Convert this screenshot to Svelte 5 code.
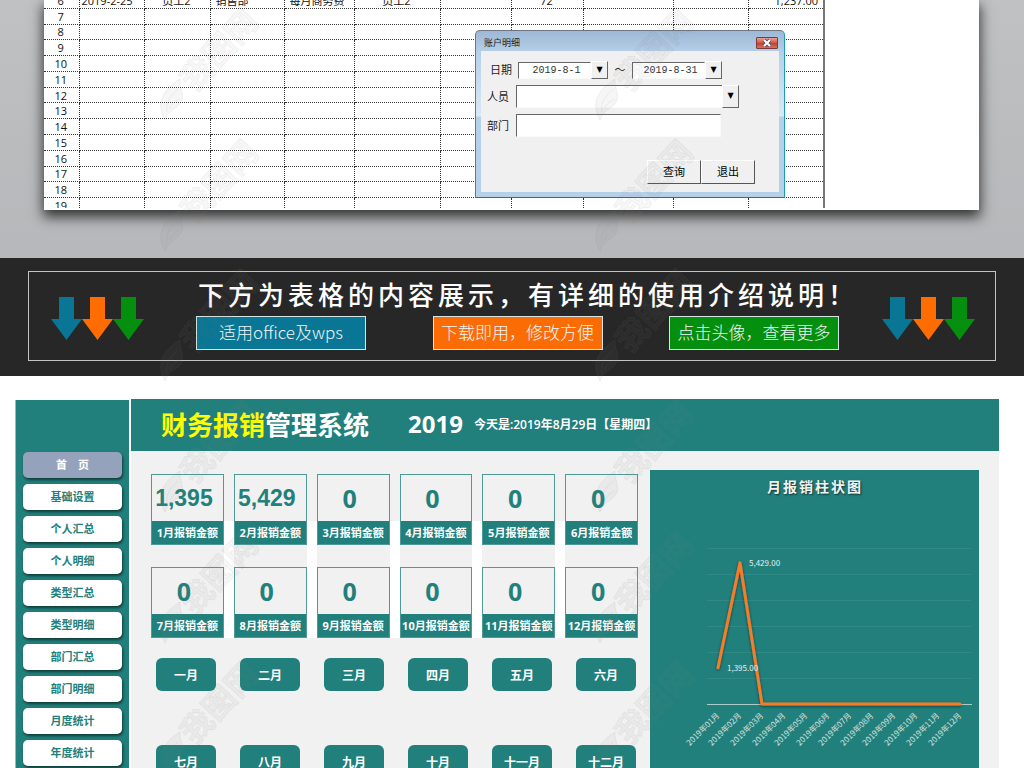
<script>
  const sheetRows = Array.from({ length: 14 }, (_, i) =>
    i === 0
      ? [6, '2019-2-25', '员工2', '销售部', '每月商务费', '员工2', '', '72', '', '', '1,237.00']
      : [i + 6, '', '', '', '', '', '', '', '', '', '']
  );
  const columnWidths = [35, 65, 66, 74, 70, 86, 71, 72, 90, 75, 76];

  const arrows = ['#087694', '#ff6c02', '#04900e'];
  const tags = [
    { text: '适用office及wps', color: '#087694' },
    { text: '下载即用，修改方便', color: '#fb6c05' },
    { text: '点击头像，查看更多', color: '#04900e' }
  ];

  const nav = ['首　页', '基础设置', '个人汇总', '个人明细', '类型汇总', '类型明细', '部门汇总', '部门明细', '月度统计', '年度统计'];
  const totals = ['1,395', '5,429', ...Array(10).fill('0')];
  const months = ['一月', '二月', '三月', '四月', '五月', '六月', '七月', '八月', '九月', '十月', '十一月', '十二月'];

  const values = [1395, 5429, 0, 0, 0, 0, 0, 0, 0, 0, 0, 0];
  const px = (i) => 68 + i * 22;
  const py = (v) => 234 - (v * 26) / 1000;
  const line = values.map((v, i) => `${px(i)},${py(v)}`).join(' ');
  const labels = values.map((_, i) => `2019年${String(i + 1).padStart(2, '0')}月`);

  const marks = [208, 643].flatMap((x) => [67, 198, 328, 459, 590, 720].map((y) => [x, y]));
</script>

<div class="page">
  <section class="stage">
    <div class="sheet">
      <div class="clip">
        <table>
          <colgroup>
            {#each columnWidths as w}<col style="width:{w}px" />{/each}
          </colgroup>
          <tbody>
            {#each sheetRows as row}
              <tr>
                {#each row as cell}<td>{cell}</td>{/each}
              </tr>
            {/each}
          </tbody>
        </table>
      </div>
    </div>

    <form class="dialog" onsubmit={(e) => e.preventDefault()}>
      <div class="titlebar">
        <span>账户明细</span>
        <button type="button" class="close" aria-label="关闭">
          <svg width="10" height="8" viewBox="0 0 10 8"><path d="M2 1l6 6M8 1l-6 6" stroke="#54505c" stroke-width="4" /><path d="M2 1l6 6M8 1l-6 6" stroke="#fff" stroke-width="2" /></svg>
        </button>
      </div>
      <div class="client">
        <div class="row dates">
          <label for="from">日期</label>
          <input id="from" class="date" value="2019-8-1" />
          <button type="button" class="drop" aria-label="选择开始日期">▼</button>
          <span class="tilde">～</span>
          <input class="date" aria-label="结束日期" value="2019-8-31" />
          <button type="button" class="drop" aria-label="选择结束日期">▼</button>
        </div>
        <div class="row">
          <label for="person">人员</label>
          <div class="combo">
            <select id="person"><option></option></select>
            <span class="drop face" aria-hidden="true">▼</span>
          </div>
        </div>
        <div class="row">
          <label for="dept">部门</label>
          <input id="dept" class="wide" />
        </div>
        <div class="actions">
          <button type="submit">查询</button>
          <button type="button">退出</button>
        </div>
      </div>
    </form>
  </section>

  <section class="banner">
    <div class="frame">
      {#snippet arrowSet()}
        <svg class="arrows" width="93" height="43" viewBox="0 0 93 43" aria-hidden="true">
          {#each arrows as c, i}
            <path transform="translate({i * 31})" d="M8 0h15v22h8L15.500 43 0 22h8z" fill={c} />
          {/each}
        </svg>
      {/snippet}
      {@render arrowSet()}
      <div class="pitch">
        <h2>下方为表格的内容展示，有详细的使用介绍说明！</h2>
        <div class="tags">
          {#each tags as tag}<span style="background:{tag.color}">{tag.text}</span>{/each}
        </div>
      </div>
      {@render arrowSet()}
    </div>
  </section>

  <section class="dashboard">
    <nav>
      {#each nav as item, i}
        <button class:active={i === 0}>{item}</button>
      {/each}
    </nav>
    <div class="main">
      <header>
        <h1><em>财务报销</em>管理系统</h1>
        <strong>2019</strong>
        <span>今天是:2019年8月29日【星期四】</span>
      </header>
      <div class="content">
        <div class="left">
          <div class="cards">
            {#each totals as total, i}
              <div class="slot">
                <div class="card">
                  <b class:amount={total !== '0'}>{total}</b>
                  <span>{i + 1}月报销金额</span>
                </div>
              </div>
            {/each}
          </div>
          <div class="months">
            {#each months as m}<button>{m}</button>{/each}
          </div>
        </div>
        <div class="chart">
          <svg viewBox="0 0 329 320" role="img" aria-label="月报销柱状图">
            <defs>
              <filter id="soft" x="-10%" y="-10%" width="120%" height="120%">
                <feDropShadow dx="0" dy="1" stdDeviation="1.500" flood-color="#000" flood-opacity="0.55" />
              </filter>
            </defs>
            <text class="heading" x="165" y="22" text-anchor="middle">月报销柱状图</text>
            {#each [78, 104, 130, 156, 182, 208] as y}
              <path d="M57 {y + 0.5}H321" stroke="#2f8a85" />
            {/each}
            <path d="M57 234.500H322" stroke="#a9cdca" />
            <polyline points={line} fill="none" stroke="#f57d2b" stroke-width="3" stroke-linejoin="round" stroke-linecap="round" filter="url(#soft)" />
            <text x="99" y="96">5,429.00</text>
            <text x="77" y="201">1,395.00</text>
            {#each labels as l, i}
              <text class="axis" text-anchor="end" transform="translate({px(i) + 2} 246) rotate(-45)">{l}</text>
            {/each}
          </svg>
        </div>
      </div>
    </div>
  </section>

  <svg class="marks" aria-hidden="true">
    {#each marks as [x, y]}
      <g transform="translate({x} {y})">
        <path d="M-43 53C-53 35-44 22-28 12-29 20-24 25-26 33-29 42-39 41-43 53zM-41 45C-43 34-36 28-30 22M-38 42C-37 36-32 34-28 32" />
        <text transform="rotate(-47)" x="-28" y="8">我图网</text>
      </g>
    {/each}
  </svg>
</div>

<style>
  :global(body) { background: #fff; }
  .page {
    position: relative;
    display: flex;
    flex-direction: column;
    height: 100vh;
    overflow: hidden;
    font-family: "Open Sans", "Noto Sans CJK SC", sans-serif;
    font-size: 11px;
    --teal: #21807c;
  }
  .page * { box-sizing: border-box; }
  button, input, select { font: inherit; margin: 0; padding: 0; }

  .stage {
    position: relative;
    flex: none;
    padding: 0 45px 48px 44px;
    background: linear-gradient(#c0c1c3, #b9babc 70%, #b7b8bb);
  }
  .sheet {
    background: #fff;
    padding-bottom: 2px;
    box-shadow: 0 6px 12px 1px #333;
  }
  .clip { height: 208px; overflow: hidden; }
  table {
    width: 780px;
    height: 221px;
    margin-top: -7px;
    table-layout: fixed;
    border-collapse: collapse;
    border-right: 2px solid #777;
    color: #111;
  }
  td {
    padding: 1px 1px 0 0;
    text-align: center;
    line-height: 12px;
    white-space: nowrap;
    border-bottom: 1px dotted #333;
    border-right: 1px dotted #333;
  }
  td:nth-child(2) { padding-left: 2px; text-align: left; }
  td:nth-child(4), td:nth-child(5) { padding-left: 5px; text-align: left; }
  td:last-child { padding-right: 5px; text-align: right; border-right: 0; }

  .dialog {
    position: absolute;
    left: 475px;
    top: 30px;
    width: 310px;
    padding: 0 5px 5px;
    border: 1px solid #6c7783;
    border-right-color: #1c9db4;
    border-bottom-color: #127a94;
    border-radius: 5px 5px 0 0;
    background: linear-gradient(#9db8d5, #b7d0ea 22px, #dbe8f5 85px, #b5d0e9 86px);
    font-family: "Noto Sans CJK SC", sans-serif;
    color: #222;
  }
  .titlebar {
    display: flex;
    align-items: center;
    justify-content: space-between;
    height: 20px;
    padding: 3px 1px 0 3px;
    font-size: 9px;
  }
  .close {
    display: grid;
    place-items: center;
    width: 22px;
    height: 12px;
    border: 1px solid #7b3b3b;
    border-radius: 1px;
    background: linear-gradient(#e3a194, #d3533f 50%, #c2402c 51%, #d8715c);
  }
  .client {
    display: flex;
    flex-direction: column;
    gap: 6px;
    padding: 10px 24px 8px 6px;
    background: #f0f0f0;
  }
  .row { display: flex; align-items: center; }
  .row label { width: 29px; line-height: 20px; padding-bottom: 2px; }
  .dates label { width: 31px; padding-left: 3px; line-height: 16px; }
  .row input, .row select {
    border: 1px solid #fafafa;
    border-top: 1px solid #666;
    border-left: 1px solid #666;
    border-radius: 0;
    background: #fff;
    color: #333;
    outline: 0;
  }
  .row .date {
    width: 73px;
    height: 17px;
    font: 10px "Liberation Mono", monospace;
    text-align: center;
    padding-left: 4px;
  }
  .row .wide { width: 205px; height: 23px; }
  .drop {
    display: grid;
    place-items: center;
    width: 17px;
    height: 18px;
    padding-bottom: 2px;
    border: 1px solid #fff;
    border-right: 1px solid #666;
    border-bottom: 1px solid #666;
    background: #f0f0f0;
    color: #000;
    font: 8px "DejaVu Sans", sans-serif;
  }
  .tilde { width: 24px; text-align: center; line-height: 16px; padding-bottom: 2px; }
  .combo { display: grid; grid-template-columns: 206px 17px; }
  .combo select { grid-area: 1 / 1 / 2 / 3; height: 23px; appearance: none; }
  .combo .face { grid-area: 1 / 2; height: 23px; pointer-events: none; }
  .actions { display: flex; justify-content: flex-end; padding-top: 17px; }
  .actions button {
    width: 54px;
    height: 24px;
    padding-bottom: 2px;
    border: 1px solid #fff;
    border-right: 1px solid #555;
    border-bottom: 1px solid #555;
    background: #f0f0f0;
  }

  .banner { flex: none; padding: 13px 28px 15px; background: #272727; }
  .frame {
    display: grid;
    grid-template-columns: auto 1fr auto;
    height: 90px;
    padding: 0 20px 0 22px;
    border: 1px solid #c4c4c4;
  }
  .arrows { margin-top: 25px; }
  .pitch { min-width: 0; padding: 6px 43px 0 52px; }
  h2 {
    margin: 0 0 6px 2px;
    color: #fff;
    font: 500 26px/32px "Noto Sans CJK SC", sans-serif;
    letter-spacing: 4px;
    white-space: nowrap;
  }
  .tags { display: flex; justify-content: space-between; }
  .tags span {
    width: 170px;
    height: 34px;
    border: 1px solid #d5e5e5;
    color: #f1f5f5;
    font: 300 17px/30px "Noto Sans CJK SC", sans-serif;
    text-align: center;
    white-space: nowrap;
  }

  .dashboard {
    flex: 1;
    min-height: 0;
    display: grid;
    grid-template-columns: 114px 1fr;
    gap: 2px;
    padding: 23px 25px 0 15px;
  }
  nav {
    display: flex;
    flex-direction: column;
    gap: 6px;
    margin-top: 1px;
    padding: 52px 7px 0 7px;
    border-left: 1px solid #a5b5b3;
    background: var(--teal);
  }
  nav button {
    flex: none;
    height: 26px;
    padding-bottom: 2px;
    border: 0;
    border-radius: 5px;
    background: #fff;
    color: var(--teal);
    font-weight: 700;
    box-shadow: 1px 2px 3px rgba(0, 0, 0, 0.55);
  }
  nav .active { background: #95a2bb; color: #fff; }
  .main { display: flex; flex-direction: column; min-width: 0; background: #f1f1f1; }
  header {
    display: flex;
    flex: none;
    align-items: center;
    height: 52px;
    padding: 0 0 2px 30px;
    background: var(--teal);
    color: #fff;
    font-weight: 700;
    white-space: nowrap;
  }
  h1 { margin: 0 39px 0 0; font: 700 26px/40px "Noto Sans CJK SC", sans-serif; }
  h1 em { font-style: normal; color: #ff0; }
  header strong { margin-right: 11px; font: 700 24px/40px "Noto Sans", sans-serif; }
  header span { font-size: 12px; font-weight: 600; }
  .content {
    flex: 1;
    min-height: 0;
    display: grid;
    grid-template-columns: 487px 1fr;
    gap: 12px;
    padding: 19px 20px 0;
  }
  .left { padding-top: 4px; }
  .cards {
    display: grid;
    grid-template-columns: repeat(6, 1fr);
    column-gap: 10px;
    background: linear-gradient(transparent 47px, #fff 47px);
  }
  .slot { background: #f1f1f1; }
  .slot:nth-child(-n + 6) { padding-bottom: 22px; }
  .card {
    display: flex;
    flex-direction: column;
    border: 1px solid #4f9a96;
    color: var(--teal);
    text-align: center;
    white-space: nowrap;
  }
  .card b { padding-right: 7px; font: 700 25px/46px "Noto Sans", sans-serif; }
  .card .amount { font-family: "Liberation Sans", sans-serif; font-size: 23px; }
  .card span {
    background: var(--teal);
    color: #fff;
    font-weight: 700;
    line-height: 23px;
  }
  .months {
    display: grid;
    grid-template-columns: repeat(6, 60px);
    gap: 54px 24px;
    margin: 20px 0 0 5px;
  }
  .months button {
    height: 33px;
    border: 0;
    border-radius: 6px;
    background: var(--teal);
    color: #fff;
    font-size: 12px;
    font-weight: 700;
  }
  .chart { overflow: hidden; background: var(--teal); }
  .chart svg { display: block; width: 100%; }
  .chart text { fill: #e3efee; font: 8px "Noto Sans CJK SC", sans-serif; }
  .chart .axis { fill: #d2e5e3; }
  .chart .heading {
    fill: #f2f2f2;
    font: 700 14px "Noto Sans CJK SC", sans-serif;
    letter-spacing: 2px;
    text-shadow: 1px 1px 2px rgba(0, 0, 0, 0.6);
  }

  .marks {
    position: absolute;
    inset: 0;
    width: 100%;
    height: 100%;
    pointer-events: none;
    fill: rgba(128, 128, 128, 0.07);
    stroke: rgba(128, 128, 128, 0.1);
  }
  .marks text { font: 700 32px "Noto Sans CJK SC", sans-serif; }
</style>
